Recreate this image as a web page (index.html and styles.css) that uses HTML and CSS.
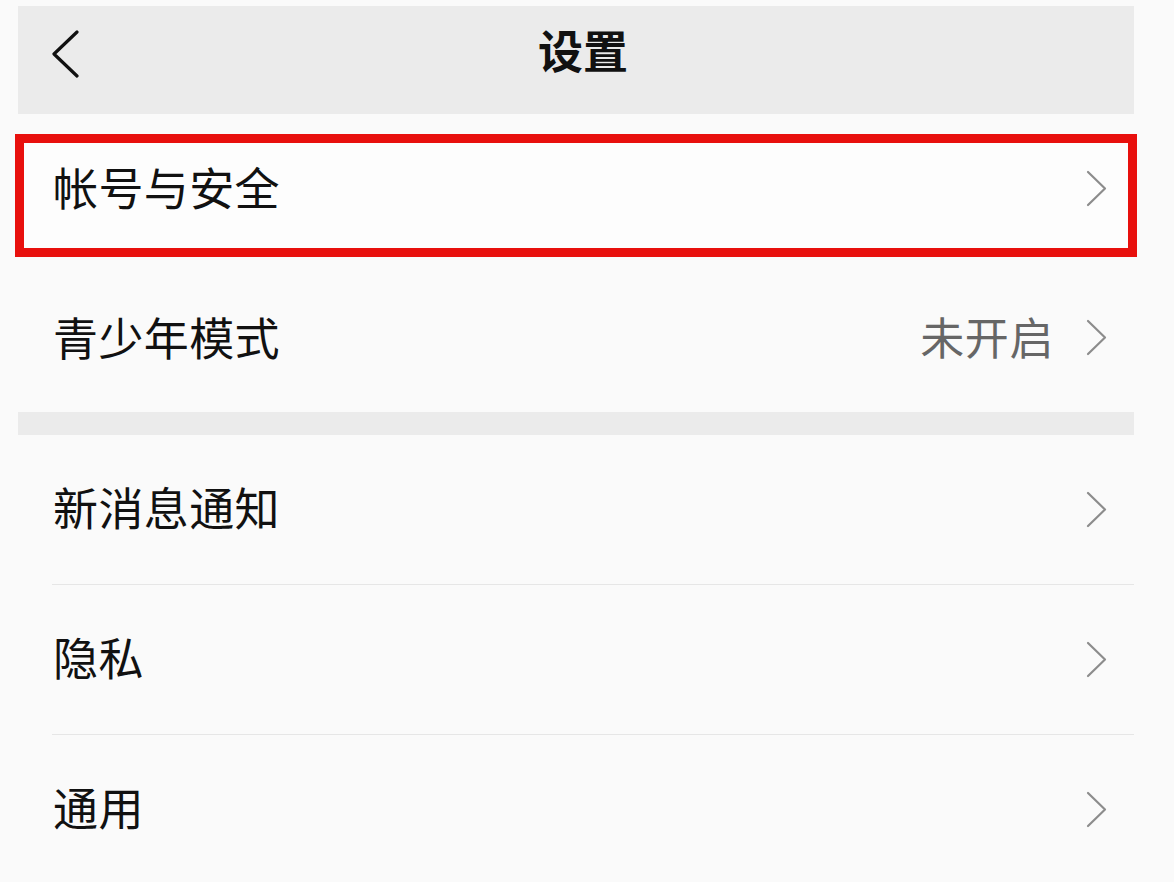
FILE: index.html
```html
<!DOCTYPE html>
<html lang="zh-CN">
<head>
<meta charset="utf-8">
<title>设置</title>
<link rel="stylesheet" href="styles.css">
</head>
<body>
<div class="page">
  <header class="nav">
    <svg class="back" width="30" height="48" viewBox="0 0 30 48"><path d="M26 2 L3 24 L26 46" fill="none" stroke="#111" stroke-width="3.2" stroke-linecap="round" stroke-linejoin="round"/></svg>
    <h1 class="title">设置</h1>
  </header>
  <section class="group">
    <div class="row row-first">
      <span class="label">帐号与安全</span>
      <span class="right"><svg class="chev" width="22" height="38" viewBox="0 0 22 38"><path d="M2 2 L19 18.5 L2 35" fill="none" stroke="#8c8c8c" stroke-width="2.2" stroke-linecap="round" stroke-linejoin="round"/></svg></span>
      <div class="highlight"></div>
    </div>
    <div class="row row-second">
      <span class="label">青少年模式</span>
      <span class="right"><span class="value">未开启</span><svg class="chev" width="22" height="38" viewBox="0 0 22 38"><path d="M2 2 L19 18.5 L2 35" fill="none" stroke="#8c8c8c" stroke-width="2.2" stroke-linecap="round" stroke-linejoin="round"/></svg></span>
    </div>
  </section>
  <div class="band"></div>
  <section class="group">
    <div class="row divided">
      <span class="label">新消息通知</span>
      <span class="right"><svg class="chev" width="22" height="38" viewBox="0 0 22 38"><path d="M2 2 L19 18.5 L2 35" fill="none" stroke="#8c8c8c" stroke-width="2.2" stroke-linecap="round" stroke-linejoin="round"/></svg></span>
    </div>
    <div class="row divided">
      <span class="label">隐私</span>
      <span class="right"><svg class="chev" width="22" height="38" viewBox="0 0 22 38"><path d="M2 2 L19 18.5 L2 35" fill="none" stroke="#8c8c8c" stroke-width="2.2" stroke-linecap="round" stroke-linejoin="round"/></svg></span>
    </div>
    <div class="row">
      <span class="label">通用</span>
      <span class="right"><svg class="chev" width="22" height="38" viewBox="0 0 22 38"><path d="M2 2 L19 18.5 L2 35" fill="none" stroke="#8c8c8c" stroke-width="2.2" stroke-linecap="round" stroke-linejoin="round"/></svg></span>
    </div>
  </section>
</div>
</body>
</html>
```
FILE: styles.css
```css
html, body {
  margin: 0;
  padding: 0;
  background: #fafafa;
}
body {
  font-family: "Noto Sans CJK SC", "Noto Sans", sans-serif;
  color: #111;
  overflow: hidden;
}
.page {
  width: 1116px;
  margin-left: 18px;
  padding-top: 6px;
}
.nav {
  position: relative;
  height: 108px;
  background: #ebebeb;
  display: flex;
  align-items: center;
  justify-content: center;
}
.back {
  position: absolute;
  left: 33px;
  top: 24px;
}
.title {
  margin: 0;
  font-size: 45px;
  font-weight: 700;
  line-height: 1;
  padding-left: 14px;
  padding-bottom: 22px;
}
.group {
  display: flex;
  flex-direction: column;
}
.row {
  position: relative;
  height: 150px;
  box-sizing: border-box;
  display: flex;
  align-items: center;
  justify-content: space-between;
  padding-left: 35px;
  padding-right: 26px;
}
.row .label, .row .value {
  padding-bottom: 8px;
}
.row-first .label {
  padding-bottom: 5px;
}
.row-second {
  height: 148px;
}
.row-second .label, .row-second .value {
  padding-bottom: 4px;
}
.divided::after {
  content: "";
  position: absolute;
  left: 34px;
  right: 0;
  bottom: 0;
  height: 1px;
  background: #e6e6e6;
}
.label {
  font-size: 45px;
  line-height: 1;
  letter-spacing: 0.4px;
}
.right {
  display: flex;
  align-items: center;
  gap: 32px;
}
.value {
  font-size: 44px;
  line-height: 1;
  color: #666;
  letter-spacing: 0.6px;
}
.chev {
  display: block;
}
.highlight {
  position: absolute;
  left: -3px;
  right: -3px;
  top: 20px;
  bottom: 7px;
  border: 9px solid #e8100d;
  background: rgba(255,255,255,0.6);
  pointer-events: none;
}
.row-first .label, .row-first .right {
  position: relative;
  z-index: 1;
}
.band {
  height: 23px;
  background: #ebebeb;
}
```
